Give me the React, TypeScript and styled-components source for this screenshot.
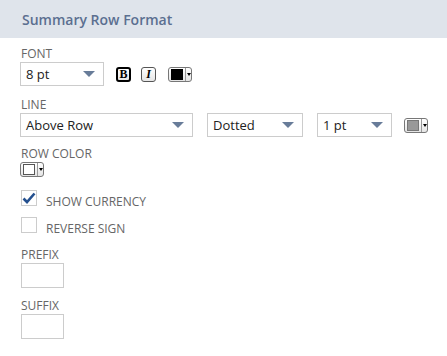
import React from 'react';
import styled, { createGlobalStyle } from 'styled-components';

const GlobalStyle = createGlobalStyle`
  html, body {
    margin: 0;
    padding: 0;
    background: #fff;
    font-family: "Open Sans", "Liberation Sans", sans-serif;
  }
`;

const Panel = styled.div`
  width: 447px;
  height: 356px;
  background: #fff;
  overflow: hidden;
`;

const Header = styled.div`
  height: 38px;
  background: #dfe4eb;
  display: flex;
  align-items: center;
  padding-left: 22px;
  color: #5b6f90;
  font-weight: 600;
  font-size: 14px;
`;

const Body = styled.div`
  padding: 8px 0 0 20px;
  display: flex;
  flex-direction: column;
`;

const Field = styled.div<{ $mt?: number }>`
  display: flex;
  flex-direction: column;
  margin-top: ${(p) => p.$mt ?? 0}px;
`;

const Label = styled.div`
  font-size: 12px;
  line-height: 16px;
  color: #666;
  text-transform: uppercase;
  padding-left: 1px;
`;

const Row = styled.div`
  display: flex;
  align-items: center;
`;

const Select = styled.div<{ $w: number; $ml?: number }>`
  width: ${(p) => p.$w}px;
  height: 24px;
  margin-left: ${(p) => p.$ml ?? 0}px;
  box-sizing: border-box;
  border: 1px solid #cccccc;
  display: flex;
  align-items: center;
  justify-content: space-between;
  padding: 0 8px 0 5px;
  font-size: 13px;
  color: #222;
`;

const Arrow = styled.span`
  width: 0;
  height: 0;
  border-left: 6px solid transparent;
  border-right: 6px solid transparent;
  border-top: 6px solid #687c99;
`;

const StyleBtn = styled.div<{ $bold?: boolean; $ml: number }>`
  width: 15px;
  height: 15px;
  margin-left: ${(p) => p.$ml}px;
  box-sizing: border-box;
  border: ${(p) => (p.$bold ? '2px solid #000' : '1px solid #555')};
  border-radius: 3px;
  background: linear-gradient(#fff, #e6e6e6);
  display: flex;
  align-items: center;
  justify-content: center;
  font-family: "Liberation Serif", serif;
  font-size: 12px;
  font-weight: bold;
  font-style: ${(p) => (p.$bold ? 'normal' : 'italic')};
  color: #000;
  line-height: 1;
`;

const Swatch = styled.div<{ $ml?: number }>`
  width: 24px;
  height: 15px;
  margin-left: ${(p) => p.$ml ?? 0}px;
  box-sizing: border-box;
  border: 1px solid #777;
  border-radius: 3px;
  background: linear-gradient(#fff, #e4e4e4);
  display: flex;
  align-items: center;
  padding-left: 2px;
`;

const SwatchColor = styled.div<{ $c: string; $border: string }>`
  width: 12px;
  height: 11px;
  box-sizing: border-box;
  background: ${(p) => p.$c};
  border: 1px solid ${(p) => p.$border};
`;

const SwatchArrow = styled.div`
  flex: 1;
  height: 100%;
  border-left: 1px solid #999;
  margin-left: 2px;
  display: flex;
  align-items: center;
  justify-content: center;

  &::after {
    content: '';
    border-left: 2px solid transparent;
    border-right: 2px solid transparent;
    border-top: 3px solid #000;
  }
`;

const CheckRow = styled.div<{ $mt: number }>`
  display: flex;
  align-items: flex-start;
  gap: 9px;
  height: 16px;
  margin-top: ${(p) => p.$mt}px;
  padding-left: 1px;
`;

const Box = styled.div`
  width: 16px;
  height: 16px;
  flex-shrink: 0;
  box-sizing: border-box;
  border: 1px solid #cccccc;
  display: flex;
  align-items: center;
  justify-content: center;
`;

const CheckText = styled.span`
  font-size: 12px;
  line-height: 16px;
  color: #666;
  text-transform: uppercase;
  margin-top: 4px;
`;

const TextBox = styled.div`
  width: 43px;
  height: 25px;
  box-sizing: border-box;
  border: 1px solid #cccccc;
  margin-left: 1px;
`;

const ColorPicker = ({ c, border, ml }: { c: string; border: string; ml?: number }) => (
  <Swatch $ml={ml}>
    <SwatchColor $c={c} $border={border} />
    <SwatchArrow />
  </Swatch>
);

export default function App() {
  return (
    <Panel>
      <GlobalStyle />
      <Header>Summary Row Format</Header>
      <Body>
        <Field>
          <Label>Font</Label>
          <Row>
            <Select $w={84}>
              8 pt <Arrow />
            </Select>
            <StyleBtn $bold $ml={12}>B</StyleBtn>
            <StyleBtn $ml={10}>I</StyleBtn>
            <ColorPicker c="#000" border="#000" ml={12} />
          </Row>
        </Field>
        <Field $mt={11}>
          <Label>Line</Label>
          <Row>
            <Select $w={173}>
              Above Row <Arrow />
            </Select>
            <Select $w={96} $ml={14}>
              Dotted <Arrow />
            </Select>
            <Select $w={75} $ml={14}>
              1 pt <Arrow />
            </Select>
            <ColorPicker c="#999" border="#777" ml={12} />
          </Row>
        </Field>
        <Field $mt={9}>
          <Label>Row Color</Label>
          <Row>
            <ColorPicker c="#fff" border="#555" />
          </Row>
        </Field>
        <CheckRow $mt={13}>
          <Box>
            <svg width="14" height="12" viewBox="0 0 14 12">
              <path d="M1.5 6.5 L5 10 L12.5 1.5" fill="none" stroke="#24508f" strokeWidth="2.6" />
            </svg>
          </Box>
          <CheckText>Show Currency</CheckText>
        </CheckRow>
        <CheckRow $mt={11}>
          <Box />
          <CheckText>Reverse Sign</CheckText>
        </CheckRow>
        <Field $mt={14}>
          <Label>Prefix</Label>
          <TextBox />
        </Field>
        <Field $mt={10}>
          <Label>Suffix</Label>
          <TextBox />
        </Field>
      </Body>
    </Panel>
  );
}
